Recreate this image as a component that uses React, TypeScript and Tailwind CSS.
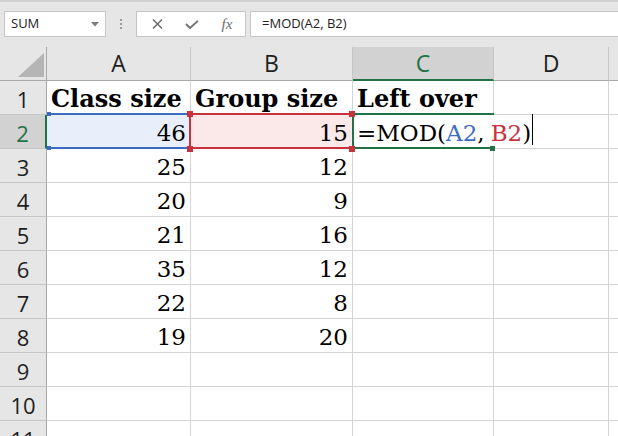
import React from "react";

const uiFont = "font-['Open_Sans','Noto_Sans',sans-serif]";
const cellFont = "font-['DejaVu_Serif','Liberation_Serif',serif]";

type Cell = { text?: string; bold?: boolean; num?: boolean };

const data: Cell[][] = [
  [
    { text: "Class size", bold: true },
    { text: "Group size", bold: true },
    { text: "Left over", bold: true },
  ],
  [{ text: "46", num: true }, { text: "15", num: true }, {}],
  [{ text: "25", num: true }, { text: "12", num: true }, {}],
  [{ text: "20", num: true }, { text: "9", num: true }, {}],
  [{ text: "21", num: true }, { text: "16", num: true }, {}],
  [{ text: "35", num: true }, { text: "12", num: true }, {}],
  [{ text: "22", num: true }, { text: "8", num: true }, {}],
  [{ text: "19", num: true }, { text: "20", num: true }, {}],
  [{}, {}, {}],
  [{}, {}, {}],
  [{}, {}, {}],
];

const colWidths = ["w-[144px]", "w-[162px]", "w-[141px]"];

function CellText({ cell }: { cell: Cell }) {
  if (!cell.text) return null;
  return (
    <span
      className={`${cellFont} whitespace-nowrap leading-none text-black ${
        cell.bold ? "text-[24px] font-bold" : "text-[23px]"
      }`}
    >
      {cell.text}
    </span>
  );
}

function Toolbar() {
  return (
    <div className="flex h-[47px] items-start border-t-2 border-[#d0d0d0] bg-[#e6e6e6] pt-[9px]">
      <div className="ml-[4px] flex h-[26px] w-[102px] items-center justify-between border border-[#c6c6c6] bg-white pl-[6px] pr-[6px]">
        <span className={`${uiFont} text-[13px] text-[#222]`}>SUM</span>
        <svg width="8" height="5" viewBox="0 0 8 5">
          <path d="M0 0 H8 L4 4.5 Z" fill="#7a7a7a" />
        </svg>
      </div>
      <div className="flex h-[26px] w-[30px] flex-col items-center justify-center gap-[2px]">
        <span className="h-[2px] w-[2px] bg-[#9a9a9a]" />
        <span className="h-[2px] w-[2px] bg-[#9a9a9a]" />
        <span className="h-[2px] w-[2px] bg-[#9a9a9a]" />
      </div>
      <div className="flex h-[26px] w-[110px] items-center border border-[#c6c6c6] bg-white">
        <div className="flex w-[38px] justify-center pl-[2px]">
          <svg width="11" height="10" viewBox="0 0 11 10">
            <path d="M1 0.5 L10 9.5 M10 0.5 L1 9.5" stroke="#6e6e6e" strokeWidth="1.5" />
          </svg>
        </div>
        <div className="flex w-[34px] justify-center">
          <svg width="14" height="9" viewBox="0 0 14 9">
            <path d="M1 4 L5 8 L13 0.8" stroke="#6e6e6e" strokeWidth="1.8" fill="none" />
          </svg>
        </div>
        <div className="flex w-[36px] justify-center">
          <span className="font-['Liberation_Serif',serif] text-[15px] italic leading-none text-[#6e6e6e]">
            fx
          </span>
        </div>
      </div>
      <div className="ml-[4px] flex h-[26px] flex-1 items-center border border-r-0 border-[#c6c6c6] bg-white pl-[11px]">
        <span className={`${uiFont} text-[13px] text-[#222]`}>=MOD(A2, B2)</span>
      </div>
    </div>
  );
}

function HeaderRow() {
  const letters = ["A", "B", "C", "D"];
  const widths = ["w-[144px]", "w-[162px]", "w-[141px]", "w-[115px]"];
  return (
    <div className="flex h-[34px]">
      <div className="flex w-[47px] items-end justify-end border-r border-b border-[#a8a8a8] bg-[#e6e6e6] pr-[2px] pb-[3px]">
        <svg width="26" height="24" viewBox="0 0 26 24">
          <path d="M26 0 V24 H0 Z" fill="#b5b5b5" />
        </svg>
      </div>
      {letters.map((l, i) => {
        const active = l === "C";
        return (
          <div
            key={l}
            className={`flex items-center justify-center border-r border-[#c6c6c6] ${widths[i]} ${
              active
                ? "border-b-2 border-b-[#217346] bg-[#d2d2d2] text-[#217346]"
                : "border-b border-b-[#a8a8a8] bg-[#e6e6e6] text-[#1e1e1e]"
            }`}
          >
            <span className={`${uiFont} text-[23px] leading-none`}>{l}</span>
          </div>
        );
      })}
      <div className="flex-1 border-b border-[#a8a8a8] bg-[#e6e6e6]" />
    </div>
  );
}

function FormulaEdit() {
  return (
    <span className={`${cellFont} flex items-end whitespace-nowrap text-[23px] leading-none text-black`}>
      =MOD(
      <span className="text-[#3b6cc4]">A2</span>, <span className="ml-[6px] text-[#c8323d]">B2</span>)
      <span className="ml-[1px] h-[31px] w-[1px] self-end bg-black" />
    </span>
  );
}

function GridRow({ index, cells }: { index: number; cells: Cell[] }) {
  const rowNo = index + 1;
  const activeRow = rowNo === 2;
  return (
    <div className="flex h-[34px]">
      <div
        className={`flex w-[47px] items-center justify-center border-b border-[#c6c6c6] ${
          activeRow
            ? "border-r-2 border-r-[#217346] bg-[#d2d2d2] text-[#217346]"
            : "border-r border-r-[#a8a8a8] bg-[#e6e6e6] text-[#1e1e1e]"
        }`}
      >
        <span className={`${uiFont} pt-[2px] text-[22px] leading-none`}>{rowNo}</span>
      </div>
      {cells.map((cell, ci) => {
        const bg =
          activeRow && ci === 0
            ? "bg-[#e8effa]"
            : activeRow && ci === 1
              ? "bg-[#fbe9ea]"
              : "bg-white";
        const editCell = activeRow && ci === 2;
        return (
          <div
            key={ci}
            className={`flex items-end border-b border-[#d4d4d4] pb-[3px] ${colWidths[ci]} ${bg} ${
              editCell ? "relative z-10 border-r border-r-white" : "border-r border-r-[#d4d4d4]"
            } ${cell.num ? "justify-end pr-[4px]" : "justify-start pl-[4px]"}`}
          >
            {editCell ? <FormulaEdit /> : <CellText cell={cell} />}
          </div>
        );
      })}
      <div className="w-[115px] border-r border-b border-[#d4d4d4] bg-white" />
      <div className="flex-1 border-b border-[#d4d4d4] bg-white" />
    </div>
  );
}

export default function App() {
  return (
    <div className="relative h-[436px] w-[618px] overflow-hidden bg-white">
      <Toolbar />
      <HeaderRow />
      {data.map((cells, i) => (
        <GridRow key={i} index={i} cells={cells} />
      ))}

      {/* reference highlight for A2 */}
      <div className="absolute top-[113px] left-[47px] h-[36px] w-[144px] border-y-2 border-[#3b6cc4]" />
      <div className="absolute top-[112px] left-[47px] h-[4px] w-[4px] bg-[#3b6cc4]" />
      <div className="absolute top-[146px] left-[47px] h-[4px] w-[4px] bg-[#3b6cc4]" />

      {/* active cell C2 */}
      <div className="absolute top-[113px] left-[352px] z-20 h-[36px] w-[142px] border-y-2 border-l-2 border-[#217346]" />
      <div className="absolute top-[146px] left-[490px] z-20 h-[5px] w-[5px] bg-[#217346]" />

      {/* reference highlight for B2 */}
      <div className="absolute top-[113px] left-[189px] z-20 h-[36px] w-[164px] border-y-2 border-l-2 border-[#c8323d]" />
      <div className="absolute top-[111px] left-[187px] z-30 h-[6px] w-[6px] bg-[#c8323d]" />
      <div className="absolute top-[146px] left-[187px] z-30 h-[6px] w-[6px] bg-[#c8323d]" />
      <div className="absolute top-[111px] left-[349px] z-30 h-[6px] w-[6px] bg-[#c8323d]" />
      <div className="absolute top-[146px] left-[349px] z-30 h-[6px] w-[6px] bg-[#c8323d]" />
    </div>
  );
}
